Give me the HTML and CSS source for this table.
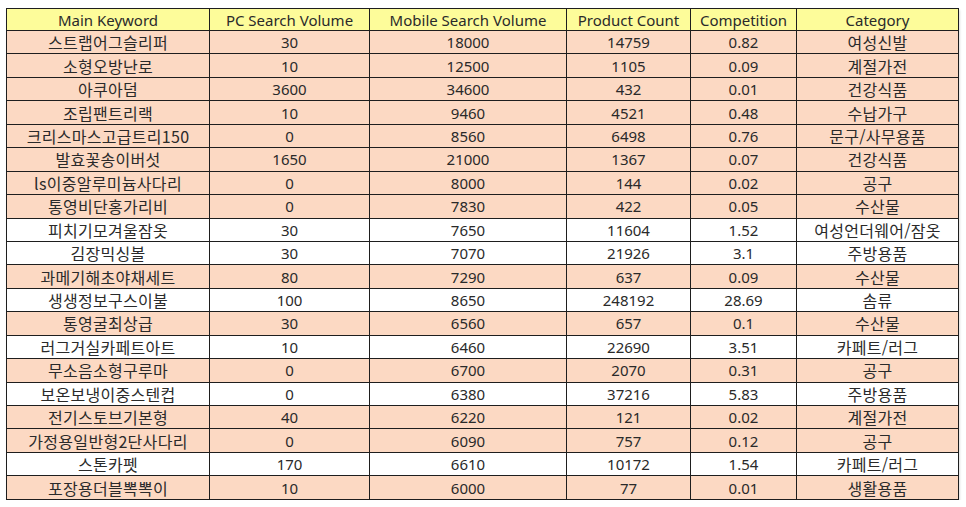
FILE: index.html
```html
<!DOCTYPE html>
<html lang="ko">
<head>
<meta charset="utf-8">
<title>Keyword Table</title>
<link rel="stylesheet" href="styles.css">
</head>
<body>
<table class="kw-table">
  <colgroup>
    <col class="c1"><col class="c2"><col class="c3"><col class="c4"><col class="c5"><col class="c6">
  </colgroup>
  <thead>
    <tr class="head"><th>Main Keyword</th><th>PC Search Volume</th><th>Mobile Search Volume</th><th>Product Count</th><th>Competition</th><th>Category</th></tr>
  </thead>
  <tbody>
    <tr class="peach"><td class="ko">스트랩어그슬리퍼</td><td>30</td><td>18000</td><td>14759</td><td>0.82</td><td class="ko">여성신발</td></tr>
    <tr class="peach"><td class="ko">소형오방난로</td><td>10</td><td>12500</td><td>1105</td><td>0.09</td><td class="ko">계절가전</td></tr>
    <tr class="peach"><td class="ko">아쿠아덤</td><td>3600</td><td>34600</td><td>432</td><td>0.01</td><td class="ko">건강식품</td></tr>
    <tr class="peach"><td class="ko">조립팬트리랙</td><td>10</td><td>9460</td><td>4521</td><td>0.48</td><td class="ko">수납가구</td></tr>
    <tr class="peach"><td class="ko">크리스마스고급트리150</td><td>0</td><td>8560</td><td>6498</td><td>0.76</td><td class="ko">문구/사무용품</td></tr>
    <tr class="peach"><td class="ko">발효꽃송이버섯</td><td>1650</td><td>21000</td><td>1367</td><td>0.07</td><td class="ko">건강식품</td></tr>
    <tr class="peach"><td class="ko">ls이중알루미늄사다리</td><td>0</td><td>8000</td><td>144</td><td>0.02</td><td class="ko">공구</td></tr>
    <tr class="peach"><td class="ko">통영비단홍가리비</td><td>0</td><td>7830</td><td>422</td><td>0.05</td><td class="ko">수산물</td></tr>
    <tr class="white"><td class="ko">피치기모겨울잠옷</td><td>30</td><td>7650</td><td>11604</td><td>1.52</td><td class="ko">여성언더웨어/잠옷</td></tr>
    <tr class="white"><td class="ko">김장믹싱볼</td><td>30</td><td>7070</td><td>21926</td><td>3.1</td><td class="ko">주방용품</td></tr>
    <tr class="peach"><td class="ko">과메기해초야채세트</td><td>80</td><td>7290</td><td>637</td><td>0.09</td><td class="ko">수산물</td></tr>
    <tr class="white"><td class="ko">생생정보구스이불</td><td>100</td><td>8650</td><td>248192</td><td>28.69</td><td class="ko">솜류</td></tr>
    <tr class="peach"><td class="ko">통영굴최상급</td><td>30</td><td>6560</td><td>657</td><td>0.1</td><td class="ko">수산물</td></tr>
    <tr class="white"><td class="ko">러그거실카페트아트</td><td>10</td><td>6460</td><td>22690</td><td>3.51</td><td class="ko">카페트/러그</td></tr>
    <tr class="peach"><td class="ko">무소음소형구루마</td><td>0</td><td>6700</td><td>2070</td><td>0.31</td><td class="ko">공구</td></tr>
    <tr class="white"><td class="ko">보온보냉이중스텐컵</td><td>0</td><td>6380</td><td>37216</td><td>5.83</td><td class="ko">주방용품</td></tr>
    <tr class="peach"><td class="ko">전기스토브기본형</td><td>40</td><td>6220</td><td>121</td><td>0.02</td><td class="ko">계절가전</td></tr>
    <tr class="peach"><td class="ko">가정용일반형2단사다리</td><td>0</td><td>6090</td><td>757</td><td>0.12</td><td class="ko">공구</td></tr>
    <tr class="white"><td class="ko">스톤카펫</td><td>170</td><td>6610</td><td>10172</td><td>1.54</td><td class="ko">카페트/러그</td></tr>
    <tr class="peach"><td class="ko">포장용더블뽁뽁이</td><td>10</td><td>6000</td><td>77</td><td>0.01</td><td class="ko">생활용품</td></tr>
  </tbody>
</table>
</body>
</html>
```
FILE: styles.css
```css
html, body {
  margin: 0;
  padding: 0;
  background: #ffffff;
}
body {
  padding: 8px 0 0 6px;
  font-family: "Noto Sans", "Noto Sans CJK KR", sans-serif;
  color: #2a2a2a;
}
.kw-table {
  border-collapse: collapse;
  table-layout: fixed;
  width: 952px;
  font-size: 15px;
  box-shadow: 1px 2px 2px rgba(0,0,0,0.12);
}
.c1 { width: 203px; }
.c2 { width: 160px; }
.c3 { width: 197px; }
.c4 { width: 124px; }
.c5 { width: 106px; }
.c6 { width: 162px; }
.kw-table th, .kw-table td {
  border: 1px solid #1e1e1e;
  padding: 0 2px;
  text-align: center;
  vertical-align: middle;
  white-space: nowrap;
  overflow: hidden;
  font-weight: normal;
  line-height: 18px;
}
.kw-table td.ko {
  font-family: "Noto Sans CJK KR", sans-serif;
  font-size: 16px;
  letter-spacing: 0.3px;
}
.head { height: 22px; background: #fdfc9a; }
.kw-table tbody tr { height: 23.45px; }
.peach { background: #fcd9c3; }
.white { background: #ffffff; }
```
